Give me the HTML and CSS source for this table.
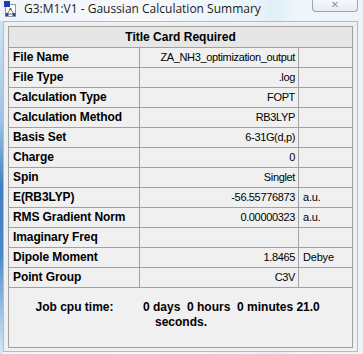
FILE: index.html
```html
<!DOCTYPE html>
<html>
<head>
<meta charset="utf-8">
<link rel="stylesheet" href="styles.css">
</head>
<body>
<div class="win">
  <div class="titlebar">
    <svg class="appicon" width="14" height="16" viewBox="0 0 14 16">
      <rect x="2.5" y="3.5" width="10" height="12" fill="#ffffff" stroke="#8a9ab0"/>
      <path d="M7.5 8 L4 13 M7.5 8 L11 13 M4 13 L11 13" stroke="#6a7a90" stroke-width="1" fill="none"/>
      <rect x="1" y="0" width="6" height="6" fill="#1f3fa8"/>
      <rect x="2.5" y="12" width="3" height="3" fill="#3a4a78"/>
      <rect x="9.5" y="12" width="3" height="3" fill="#3a4a78"/>
      <rect x="6.5" y="7" width="2" height="2" fill="#5a6a88"/>
    </svg>
    <span class="wintitle">G3:M1:V1 - Gaussian Calculation Summary</span>
    <div class="closebtn"><span>✕</span></div>
  </div>
  <div class="body">
    <div class="frame-left"></div>
    <div class="client">
      <div class="table">
        <div class="header">Title Card Required</div>
        <div class="row"><div class="lab">File Name</div><div class="val">ZA_NH3_optimization_output</div><div class="unit"></div></div>
        <div class="row"><div class="lab">File Type</div><div class="val">.log</div><div class="unit"></div></div>
        <div class="row"><div class="lab">Calculation Type</div><div class="val">FOPT</div><div class="unit"></div></div>
        <div class="row"><div class="lab">Calculation Method</div><div class="val">RB3LYP</div><div class="unit"></div></div>
        <div class="row"><div class="lab">Basis Set</div><div class="val">6-31G(d,p)</div><div class="unit"></div></div>
        <div class="row"><div class="lab">Charge</div><div class="val">0</div><div class="unit"></div></div>
        <div class="row"><div class="lab">Spin</div><div class="val">Singlet</div><div class="unit"></div></div>
        <div class="row"><div class="lab">E(RB3LYP)</div><div class="val">-56.55776873</div><div class="unit">a.u.</div></div>
        <div class="row"><div class="lab">RMS Gradient Norm</div><div class="val">0.00000323</div><div class="unit">a.u.</div></div>
        <div class="row"><div class="lab">Imaginary Freq</div><div class="val"></div><div class="unit"></div></div>
        <div class="row"><div class="lab">Dipole Moment</div><div class="val">1.8465</div><div class="unit">Debye</div></div>
        <div class="row"><div class="lab">Point Group</div><div class="val">C3V</div><div class="unit"></div></div>
      </div>
      <div class="jobbox">
        <div class="joblab">Job cpu time:</div>
        <div class="jobval"><div class="l1">0 days&nbsp; 0 hours&nbsp; 0 minutes 21.0</div><div class="l2">seconds.</div></div>
      </div>
    </div>
  </div>
</div>
</body>
</html>
```

FILE: styles.css
```css
html, body {
  margin: 0;
  padding: 0;
}
body {
  width: 363px;
  height: 354px;
  overflow: hidden;
  background: linear-gradient(90deg, #eef4f9 0%, #f6f9fc 40%, #eaf3f8 70%, #dff0f6 76%, #f1f6fa 82%, #eef3f8 100%);
  font-family: "Liberation Sans", Arial, sans-serif;
  color: #000;
}
.win {
  width: 363px;
  height: 354px;
}
.titlebar {
  height: 21px;
  display: flex;
  align-items: flex-start;
  position: relative;
}
.appicon {
  margin: 1px 0 0 3px;
  flex: none;
}
.wintitle {
  font-family: "Open Sans", "Noto Sans", sans-serif;
  font-size: 12px;
  color: #1b1b1b;
  margin: 1px 0 0 7px;
  line-height: 16px;
  white-space: nowrap;
}
.closebtn {
  position: absolute;
  left: 312px;
  top: -1px;
  width: 44px;
  height: 12px;
  border: 1px solid #9aa6b4;
  border-top: none;
  border-radius: 0 0 4px 4px;
  background: linear-gradient(#f6f9fc, #e6edf4);
  display: flex;
  justify-content: center;
  align-items: center;
}
.closebtn span {
  font-size: 10px;
  line-height: 10px;
  color: #8a95a2;
  font-family: "DejaVu Sans", sans-serif;
}
.body {
  display: flex;
  height: 333px;
}
.frame-left {
  width: 3px;
  height: 333px;
  background: linear-gradient(#cfe2f2 0%, #9cc3e4 30%, #3f7fc0 50%, #4a88c8 70%, #a8cbe8 90%, #d6e6f3 100%);
}
.client {
  width: 355px;
  border: 1px solid #b6bcc4;
  background: #f0f0f0;
  padding: 4px 0 0 4px;
  box-sizing: border-box;
  height: 331px;
}
.table {
  width: 345px;
  border: 1px solid #a0a0a0;
  border-bottom: none;
  box-sizing: border-box;
}
.header {
  height: 20px;
  border-bottom: 1px solid #a0a0a0;
  background: #e6e6e6;
  font-weight: bold;
  font-size: 12px;
  line-height: 20px;
  text-align: center;
}
.row {
  display: grid;
  grid-template-columns: 131px 159px 1fr;
  height: 20px;
  border-bottom: 1px solid #a0a0a0;
  box-sizing: border-box;
  font-size: 11px;
  line-height: 19px;
}
.lab {
  font-weight: bold;
  font-size: 12px;
  letter-spacing: -0.1px;
  padding-left: 4px;
  border-right: 1px solid #a0a0a0;
  white-space: nowrap;
}
.val {
  text-align: right;
  padding-right: 3px;
  letter-spacing: -0.35px;
  border-right: 1px solid #a0a0a0;
  white-space: nowrap;
}
.unit {
  padding-left: 4px;
  letter-spacing: -0.2px;
  white-space: nowrap;
}
.jobbox {
  width: 345px;
  height: 60px;
  border: 1px solid #a0a0a0;
  border-top: none;
  box-sizing: border-box;
  display: flex;
  font-weight: bold;
  font-size: 12px;
  line-height: 15px;
  padding-top: 12px;
}
.joblab {
  width: 131px;
  text-align: center;
}
.jobval {
  padding-left: 3px;
  white-space: nowrap;
}
.l2 {
  padding-left: 12px;
}
```
